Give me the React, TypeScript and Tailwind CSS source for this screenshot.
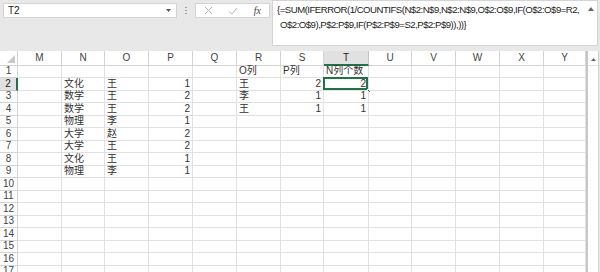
import React from "react";

const cols = [
  { n: "M", w: 44 },
  { n: "N", w: 43 },
  { n: "O", w: 44 },
  { n: "P", w: 44 },
  { n: "Q", w: 44 },
  { n: "R", w: 44 },
  { n: "S", w: 43 },
  { n: "T", w: 45 },
  { n: "U", w: 43 },
  { n: "V", w: 44 },
  { n: "W", w: 44 },
  { n: "X", w: 44 },
  { n: "Y", w: 42 },
];

type Cell = { t: string; r?: boolean };
const data: Record<number, Record<string, Cell>> = {
  1: { R: { t: "O列" }, S: { t: "P列" }, T: { t: "N列个数" } },
  2: { N: { t: "文化" }, O: { t: "王" }, P: { t: "1", r: true }, R: { t: "王" }, S: { t: "2", r: true }, T: { t: "2", r: true } },
  3: { N: { t: "数学" }, O: { t: "王" }, P: { t: "2", r: true }, R: { t: "李" }, S: { t: "1", r: true }, T: { t: "1", r: true } },
  4: { N: { t: "数学" }, O: { t: "王" }, P: { t: "2", r: true }, R: { t: "王" }, S: { t: "1", r: true }, T: { t: "1", r: true } },
  5: { N: { t: "物理" }, O: { t: "李" }, P: { t: "1", r: true } },
  6: { N: { t: "大学" }, O: { t: "赵" }, P: { t: "2", r: true } },
  7: { N: { t: "大学" }, O: { t: "王" }, P: { t: "2", r: true } },
  8: { N: { t: "文化" }, O: { t: "王" }, P: { t: "1", r: true } },
  9: { N: { t: "物理" }, O: { t: "李" }, P: { t: "1", r: true } },
};

const font = { fontFamily: '"Liberation Sans", "Noto Sans CJK SC", sans-serif' };

export default function App() {
  const rows = Array.from({ length: 17 }, (_, i) => i + 1);
  return (
    <div className="w-[600px] h-[272px] overflow-hidden bg-[#e8e8e8] text-[#333]" style={font}>
      {/* top bar */}
      <div className="h-[51px] flex items-start pt-[3px]">
        <div className="ml-[3px] w-[174px] h-[15px] bg-white border border-[#d4d4d4] flex items-center justify-between pl-[4px] pr-[5px]">
          <span className="text-[10px] text-[#222]">T2</span>
          <svg width="5" height="3" viewBox="0 0 5 3"><path d="M0 0 L5 0 L2.5 3 Z" fill="#555" /></svg>
        </div>
        <div className="w-[18px] h-[15px] flex items-center justify-center">
          <div className="flex flex-col gap-[1.5px]">
            <div className="w-[1.5px] h-[1.5px] bg-[#a0a0a0]" />
            <div className="w-[1.5px] h-[1.5px] bg-[#a0a0a0]" />
            <div className="w-[1.5px] h-[1.5px] bg-[#a0a0a0]" />
          </div>
        </div>
        <div className="w-[75px] h-[15px] bg-white border border-[#d4d4d4] flex items-center justify-between px-[8px]">
          <svg width="9" height="9" viewBox="0 0 9 9"><path d="M1 1 L8 8 M8 1 L1 8" stroke="#b5b5b5" strokeWidth="1" /></svg>
          <svg width="10" height="8" viewBox="0 0 10 8"><path d="M1 4.5 L3.8 7 L9 1" stroke="#b5b5b5" strokeWidth="1" fill="none" /></svg>
          <span className="text-[10px] italic text-[#444]" style={{ fontFamily: '"Liberation Serif", serif' }}>fx</span>
        </div>
        <div className="ml-[2px] -mt-[3px] w-[326px] h-[46px] bg-white border border-[#d4d4d4] flex">
          <div className="flex-1 pl-[4px] pt-[1px] text-[9.6px] leading-[15px] tracking-[-0.5px] text-[#222] whitespace-nowrap">
            <div>{"{=SUM(IFERROR(1/COUNTIFS(N$2:N$9,N$2:N$9,O$2:O$9,IF(O$2:O$9=R2,"}</div>
            <div className="pl-[3px]">{"O$2:O$9),P$2:P$9,IF(P$2:P$9=S2,P$2:P$9)),))}"}</div>
          </div>
          <div className="w-[12px] pt-[6px] flex justify-center">
            <svg width="6" height="4" viewBox="0 0 6 4"><path d="M0 4 L3 0 L6 4 Z" fill="#666" /></svg>
          </div>
        </div>
      </div>
      {/* sheet */}
      <div className="flex h-[221px] bg-white">
        <div className="w-[586px] flex flex-col">
          {/* header */}
          <div className="flex h-[14.5px] bg-white">
            <div className="w-[18px] shrink-0 border-r border-b border-[#d4d4d4] relative">
              <svg className="absolute right-[2px] bottom-[2px]" width="8" height="8" viewBox="0 0 8 8"><path d="M8 0 L8 8 L0 8 Z" fill="#c8c8c8" /></svg>
            </div>
            {cols.map((c) => (
              <div
                key={c.n}
                style={{ width: c.w }}
                className={
                  c.n === "T"
                    ? "shrink-0 border-r border-[#c6c6c6] border-b-2 border-b-[#217346] bg-[#e1e1e1] text-[10px] text-[#222] flex items-center justify-center"
                    : "shrink-0 border-r border-b border-[#d4d4d4] text-[10px] text-[#444] flex items-center justify-center"
                }
              >
                {c.n}
              </div>
            ))}
          </div>
          {rows.map((r) => (
            <div key={r} className="flex h-[12.5px] shrink-0">
              <div
                className={
                  r === 2
                    ? "w-[18px] shrink-0 border-r-2 border-r-[#217346] border-b border-[#c6c6c6] bg-[#e1e1e1] text-[10px] text-[#222] flex items-center justify-center leading-none"
                    : "w-[18px] shrink-0 border-r border-b border-[#d4d4d4] text-[10px] text-[#444] flex items-center justify-center leading-none"
                }
              >
                {r}
              </div>
              {cols.map((c) => {
                const cell = data[r]?.[c.n];
                const sel = r === 2 && c.n === "T";
                return (
                  <div
                    key={c.n}
                    style={{ width: c.w }}
                    className={
                      "shrink-0 relative border-r border-b border-[#e1e1e1] text-[10px] leading-none text-[#333] flex items-center px-[2px] whitespace-nowrap " +
                      (cell?.r ? "justify-end" : "justify-start")
                    }
                  >
                    {cell?.t}
                    {sel && (
                      <>
                        <div className="absolute -left-[1px] -top-[1px] right-0 bottom-0 border-2 border-[#217346]" />
                        <div className="absolute -right-[3px] -bottom-[3px] w-[4px] h-[4px] bg-[#217346] border border-white" />
                      </>
                    )}
                  </div>
                );
              })}
            </div>
          ))}
        </div>
        {/* scrollbar */}
        <div className="w-[14px] border-l-2 border-[#c6c6c6] bg-[#e8e8e8] flex">
          <div className="w-[10px] bg-white flex flex-col">
            <div className="h-[13px] mt-[2px] flex items-center justify-center border-b border-[#e0e0e0]">
              <svg width="5" height="3" viewBox="0 0 5 3"><path d="M0 3 L2.5 0 L5 3 Z" fill="#666" /></svg>
            </div>
          </div>
          <div className="flex-1 border-l border-[#d4d4d4]" />
        </div>
      </div>
    </div>
  );
}
